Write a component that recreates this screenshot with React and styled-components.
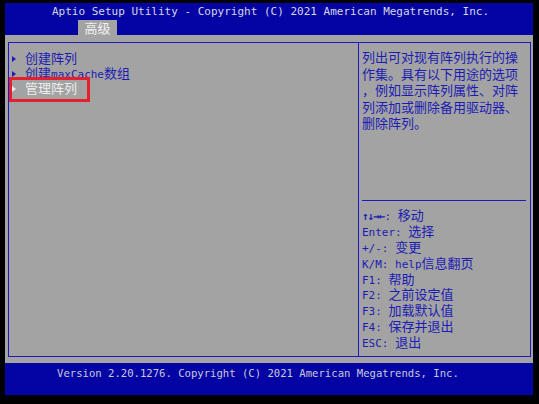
import React from 'react';
import styled, { createGlobalStyle } from 'styled-components';

const Global = createGlobalStyle`
  html, body { margin: 0; padding: 0; background: #000; }
  body {
    width: 539px; height: 404px; overflow: hidden;
    font-family: "DejaVu Sans Mono", "Liberation Mono", "Noto Sans CJK SC", monospace;
  }
`;

const BLUE = '#0404a4';
const GRAY = '#a3a3a3';
const INK = '#1c1cb4';
const LINE = '#1a1ac0';

const Screen = styled.div`
  width: 539px; height: 404px; box-sizing: border-box;
  padding: 3px 6px 9px 5px;
  display: flex; flex-direction: column;
  background: #000;
`;

const Header = styled.header`
  height: 32px; flex: none;
  background: ${BLUE};
  display: flex; flex-direction: column;
`;

const Title = styled.div`
  height: 17px; line-height: 17px;
  padding-left: 47px;
  color: #d6d6e0; font-size: 11px; white-space: pre;
`;

const TabRow = styled.div`
  flex: 1; display: flex; align-items: flex-end; padding-left: 73px;
`;

const Tab = styled.div`
  width: 39px; height: 15px;
  background: ${GRAY}; color: #f2f2f2;
  display: flex; align-items: center; justify-content: center;
  font-size: 11px;
`;

const Main = styled.main`
  flex: 1; min-height: 0;
  background: ${GRAY};
  padding: 7px 2px 6px 3px;
  display: flex;
`;

const Frame = styled.div`
  flex: 1;
  border: 1px solid ${LINE};
  display: grid; grid-template-columns: 349px 1fr;
`;

const MenuList = styled.ul`
  list-style: none; margin: 0; padding: 8px 0 0 0;
`;

const MenuItem = styled.li`
  position: relative;
  height: 15px; line-height: 15px;
  display: flex; align-items: center;
  font-size: 11px;
  color: ${p => (p.$selected ? '#ededed' : INK)};
  ${p => p.$selected && `
    &::after {
      content: ''; position: absolute;
      left: 0; top: -4px; width: 81px; height: 25px;
      box-sizing: border-box; border: 3px solid #e3202c;
    }
  `}
`;

const Marker = styled.span`
  width: 0; height: 0; margin: 0 9px 0 3px;
  border-left: 4px solid currentColor;
  border-top: 3.5px solid transparent;
  border-bottom: 3.5px solid transparent;
`;

const HelpPanel = styled.aside`
  border-left: 1px solid ${LINE};
  padding: 7px 4px 5px 3px;
  display: flex; flex-direction: column;
  color: ${INK}; font-size: 11px;
`;

const Description = styled.div`
  white-space: nowrap;
`;

const Rule = styled.hr`
  margin: auto 0 0 0; border: 0; height: 1px; background: ${LINE}; flex: none;
`;

const KeyList = styled.div`
  margin-top: 7px; white-space: pre;
`;

const Line = styled.div`
  height: ${p => p.$h}px; line-height: ${p => p.$h}px; overflow: visible;
`;

const Arrows = styled.span`
  font-weight: bold; letter-spacing: -1px;
`;

const Footer = styled.footer`
  height: 32px; flex: none;
  background: ${BLUE};
  padding-left: 52px; box-sizing: border-box;
  color: #c8c8d8; font-size: 10.6px;
  line-height: 20px; white-space: pre;
`;

const Han = styled.span`
  font-family: "Noto Sans CJK SC", sans-serif;
  font-size: 13px;
  line-height: 1;
`;

const CJK = /([\u2E80-\u9FFF\u3000-\u303F\uFF00-\uFFEF]+)/;
function Mixed({ children }) {
  return children.split(CJK).map((p, i) =>
    p && CJK.test(p) ? <Han key={i}>{p}</Han> : <React.Fragment key={i}>{p}</React.Fragment>
  );
}

const menu = [
  { label: '创建阵列' },
  { label: '创建maxCache数组' },
  { label: '管理阵列', selected: true },
];

const description = [
  '列出可对现有阵列执行的操',
  '作集。具有以下用途的选项',
  '，例如显示阵列属性、对阵',
  '列添加或删除备用驱动器、',
  '删除阵列。',
];

const keys = [
  'Enter: 选择',
  '+/-: 变更',
  'K/M: help信息翻页',
  'F1: 帮助',
  'F2: 之前设定值',
  'F3: 加载默认值',
  'F4: 保存并退出',
  'ESC: 退出',
];

export default function App() {
  return (
    <>
      <Global />
      <Screen>
        <Header>
          <Title>Aptio Setup Utility - Copyright (C) 2021 American Megatrends, Inc.</Title>
          <TabRow>
            <Tab><Mixed>高级</Mixed></Tab>
          </TabRow>
        </Header>
        <Main>
          <Frame>
            <MenuList>
              {menu.map(m => (
                <MenuItem key={m.label} $selected={m.selected}>
                  <Marker />
                  <span><Mixed>{m.label}</Mixed></span>
                </MenuItem>
              ))}
            </MenuList>
            <HelpPanel>
              <Description>
                {description.map(d => <Line key={d} $h={16.5}><Mixed>{d}</Mixed></Line>)}
              </Description>
              <Rule />
              <KeyList>
                <Line $h={15.9}><Arrows>↑↓→←</Arrows>: <Mixed>移动</Mixed></Line>
                {keys.map(k => <Line key={k} $h={15.9}><Mixed>{k}</Mixed></Line>)}
              </KeyList>
            </HelpPanel>
          </Frame>
        </Main>
        <Footer>Version 2.20.1276. Copyright (C) 2021 American Megatrends, Inc.</Footer>
      </Screen>
    </>
  );
}
